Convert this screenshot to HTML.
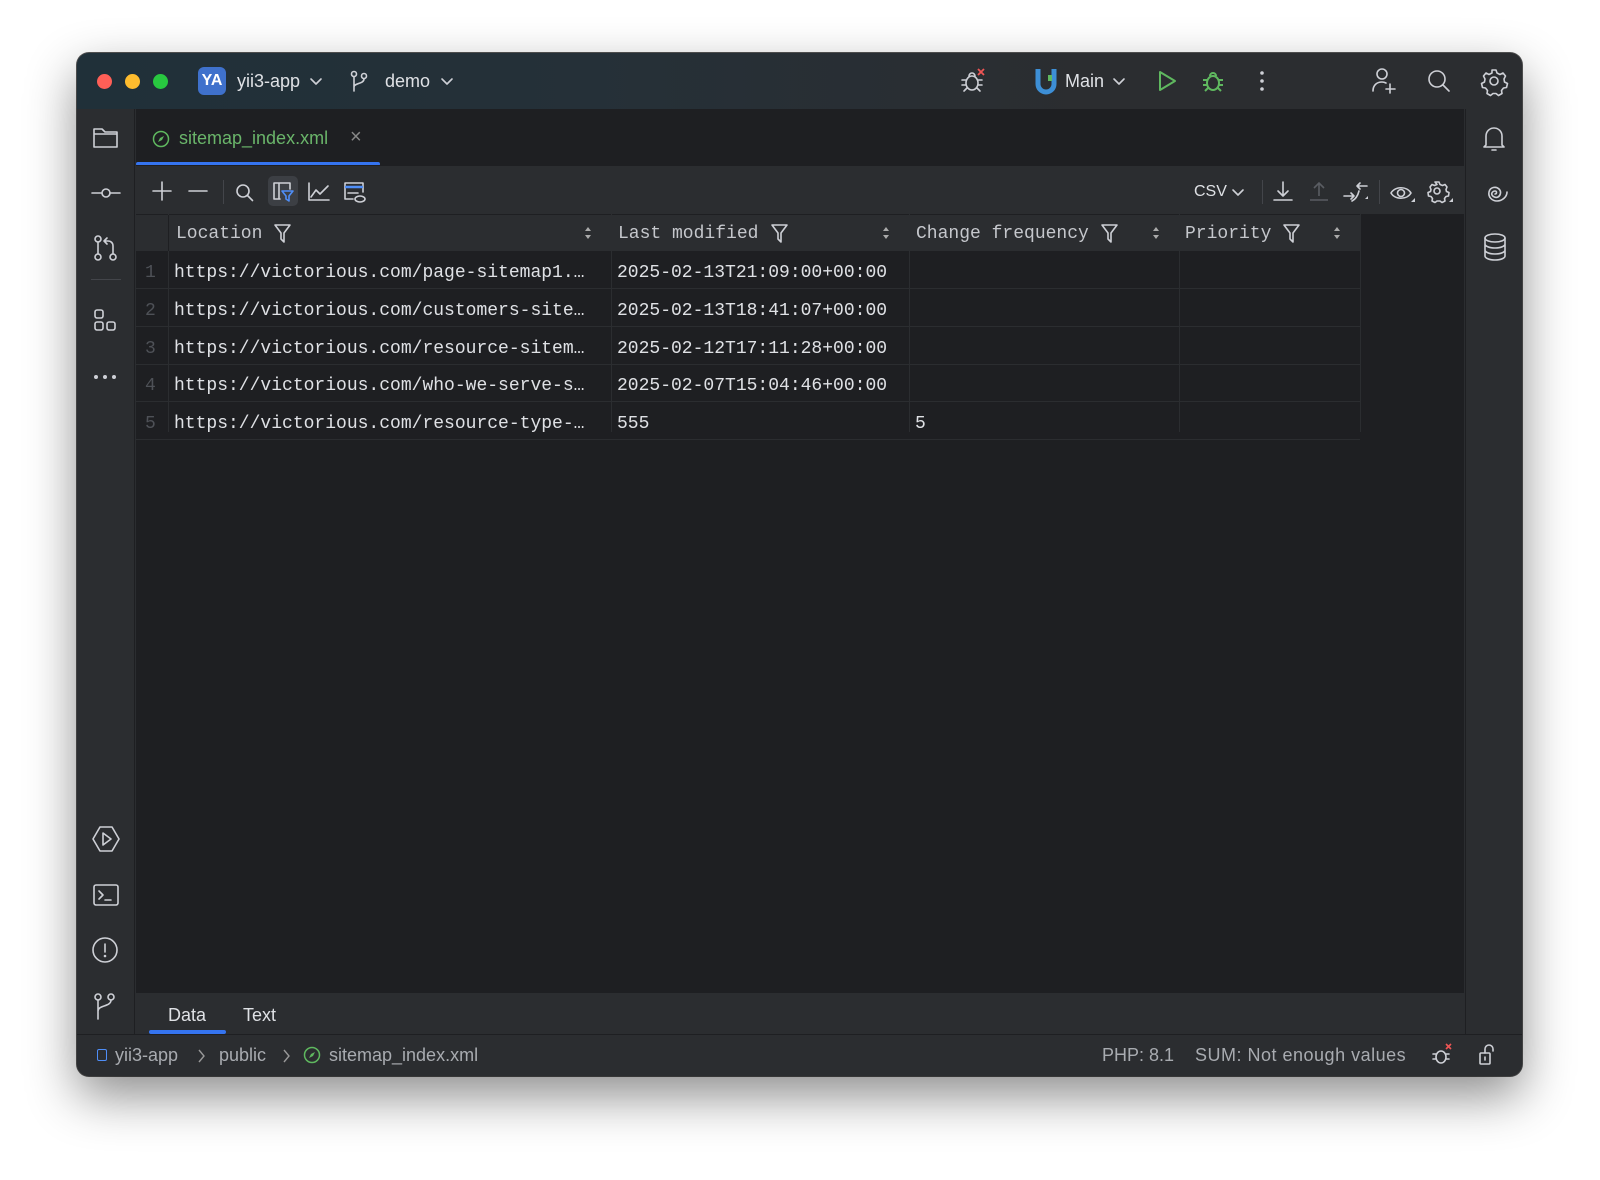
<!DOCTYPE html>
<html><head><meta charset="utf-8"><style>
*{margin:0;padding:0;box-sizing:border-box}
body{width:1600px;height:1180px;background:#fff;position:relative;overflow:hidden;font-family:"Liberation Sans",sans-serif}
.a{position:absolute}
#win{left:77px;top:53px;width:1445px;height:1023px;border-radius:12px;background:#2b2d30;overflow:hidden;box-shadow:0 20px 50px rgba(0,0,0,.45),0 0 0 1px #555;}
#tb{left:0;top:0;width:1445px;height:56px;background:linear-gradient(90deg,#203039 0%,#253038 35%,#2b2d30 70%)}
.dot{width:15px;height:15px;border-radius:50%;top:21px}
.ui{color:#dfe1e5;font-size:18px}
.mono{font-family:"Liberation Mono",monospace;font-size:18px;color:#dfe1e5}
svg{position:absolute;overflow:visible}
.ic{fill:none;stroke:#ced0d6;stroke-width:1.6;stroke-linecap:round;stroke-linejoin:round}
.row{position:absolute;left:59px;width:1224px;height:38px;border-bottom:1px solid #2b2d30}
.vl{position:absolute;top:161px;width:1px;height:218px;background:#2b2d30}
</style></head><body>
<div id="win" class="a">
 <div id="tb" class="a"></div>
 <div class="a dot" style="left:20px;background:#fe5f57"></div>
 <div class="a dot" style="left:48px;background:#febc2e"></div>
 <div class="a dot" style="left:76px;background:#28c840"></div>
 <div class="a" style="left:121px;top:14px;width:28px;height:28px;border-radius:6px;background:#3f71cc;color:#fff;font-size:16px;font-weight:bold;text-align:center;line-height:28px">YA</div>
 <div class="a ui" style="left:160px;top:18px">yii3-app</div>
 <svg style="left:233px;top:25px" width="12" height="8"><path class="ic" d="M1 1l5 5 5-5"/></svg>
 <svg style="left:273px;top:17px" width="20" height="22"><circle class="ic" cx="4" cy="4" r="2.5"/><circle class="ic" cx="14" cy="6" r="2.5"/><path class="ic" d="M4 7v14M14 9c0 5-10 4-10 8"/></svg>
 <div class="a ui" style="left:308px;top:18px">demo</div>
 <svg style="left:364px;top:25px" width="12" height="8"><path class="ic" d="M1 1l5 5 5-5"/></svg>
 <svg style="left:883px;top:15px" width="26" height="26"><ellipse class="ic" cx="12" cy="15" rx="6" ry="7"/><path class="ic" d="M9 8a3 3 0 0 1 6 0M2 12h4M18 12h4M2 17h4M18 17h4M4 23l3-3M20 23l-3-3"/><path d="M18 1l6 6M24 1l-6 6" stroke="#e55" stroke-width="1.8"/></svg>
 <svg style="left:958px;top:14px" width="22" height="28"><path d="M3 2v15a8 8 0 0 0 16 0V2" fill="none" stroke="#3d8fd6" stroke-width="5"/><rect x="13" y="8" width="4" height="6" fill="#5fb85f"/></svg>
 <div class="a ui" style="left:988px;top:18px">Main</div>
 <svg style="left:1036px;top:25px" width="12" height="8"><path class="ic" d="M1 1l5 5 5-5"/></svg>
 <svg style="left:1080px;top:17px" width="20" height="22"><path d="M3 2l15 9-15 9z" fill="none" stroke="#5fb85f" stroke-width="2" stroke-linejoin="round"/></svg>
 <svg style="left:1124px;top:15px" width="24" height="26"><ellipse cx="12" cy="15" rx="6" ry="7" fill="none" stroke="#5fb85f" stroke-width="2"/><path d="M9 8a3 3 0 0 1 6 0M2 12h4M18 12h4M2 17h4M18 17h4M4 23l3-3M20 23l-3-3" fill="none" stroke="#5fb85f" stroke-width="2"/></svg>
 <svg style="left:1182px;top:17px" width="6" height="22"><circle cx="3" cy="3" r="1.8" fill="#ced0d6"/><circle cx="3" cy="11" r="1.8" fill="#ced0d6"/><circle cx="3" cy="19" r="1.8" fill="#ced0d6"/></svg>
 <svg style="left:1294px;top:14px" width="26" height="28"><circle class="ic" cx="11" cy="7" r="5"/><path class="ic" d="M2 24c0-6 4-9 9-9 2 0 3 .5 4 1M19 17v9M15 22h9"/></svg>
 <svg style="left:1350px;top:16px" width="24" height="24"><circle class="ic" cx="10" cy="10" r="8"/><path class="ic" d="M16 16l6 6"/></svg>
 <svg style="left:1404px;top:15px" width="26" height="26"><circle class="ic" cx="13" cy="13" r="4"/><path class="ic" d="M11 2h4l1 3 3 1.5 3-1.5 2.5 3-1.5 3 .5 3 3 1.5-1 4-3 .5-2 2.5.5 3-3.5 2-2.5-2h-3l-2.5 2-3.5-2 .5-3-2-2.5-3-.5-1-4 3-1.5.5-3-1.5-3 2.5-3 3 1.5 3-1.5z"/></svg>

 <div class="a" style="left:0;top:56px;width:58px;height:925px;background:#2b2d30;border-right:1px solid #1e1f22"></div>
 <svg style="left:15px;top:73px" width="28" height="24"><path class="ic" d="M2 3h8l3 3h12v15H2z M2 8h23"/></svg>
 <svg style="left:14px;top:134px" width="30" height="12"><circle class="ic" cx="15" cy="6" r="4"/><path class="ic" d="M1 6h10M19 6h10"/></svg>
 <svg style="left:16px;top:182px" width="26" height="28"><circle class="ic" cx="5" cy="4" r="3"/><circle class="ic" cx="5" cy="22" r="3"/><circle class="ic" cx="20" cy="22" r="3"/><path class="ic" d="M5 7v12M20 19v-8c0-3-2-5-5-5h-3M14 3l-3 3 3 3"/></svg>
 <svg style="left:17px;top:256px" width="24" height="24"><rect class="ic" x="1" y="1" width="8" height="8" rx="2"/><rect class="ic" x="1" y="13" width="8" height="8" rx="2"/><rect class="ic" x="13" y="13" width="8" height="8" rx="2"/></svg>
 <svg style="left:16px;top:321px" width="26" height="6"><circle cx="3" cy="3" r="2" fill="#ced0d6"/><circle cx="12" cy="3" r="2" fill="#ced0d6"/><circle cx="21" cy="3" r="2" fill="#ced0d6"/></svg>
 <div class="a" style="left:14px;top:226px;width:30px;height:1px;background:#43454a"></div>
 <svg style="left:15px;top:773px" width="28" height="26"><path class="ic" d="M8 1h12l7 12-7 12H8L1 13z"/><path class="ic" d="M11 7l8 6-8 6z"/></svg>
 <svg style="left:16px;top:831px" width="26" height="22"><rect class="ic" x="1" y="1" width="24" height="20" rx="2"/><path class="ic" d="M6 7l4 4-4 4M12 16h6"/></svg>
 <svg style="left:15px;top:884px" width="28" height="28"><circle class="ic" cx="13" cy="13" r="12"/><path class="ic" d="M13 7v8"/><circle cx="13" cy="19" r="1.3" fill="#ced0d6"/></svg>
 <svg style="left:17px;top:940px" width="26" height="28"><circle class="ic" cx="4" cy="4" r="3"/><circle class="ic" cx="17" cy="4" r="3"/><path class="ic" d="M4 7v19M17 7c0 7-13 5-13 11"/></svg>

 <div class="a" style="left:1388px;top:56px;width:57px;height:925px;background:#2b2d30;border-left:1px solid #1e1f22"></div>
 <svg style="left:1406px;top:72px" width="24" height="28"><path class="ic" d="M3 20V11a8 8 0 0 1 16 0v9l2 2H1z M9 25h4"/></svg>
 <svg style="left:1405px;top:128px" width="26" height="26"><path class="ic" d="M13 13c2 0 2-3 0-3s-4 2-3 4 4 3 6 2 4-5 1-8-9-2-10 3 3 9 8 9 10-4 10-9"/></svg>
 <svg style="left:1407px;top:180px" width="24" height="28"><ellipse class="ic" cx="11" cy="5" rx="10" ry="4"/><path class="ic" d="M1 5v18c0 2 4 4 10 4s10-2 10-4V5M1 11c0 2 4 4 10 4s10-2 10-4M1 17c0 2 4 4 10 4s10-2 10-4"/></svg>

 <div class="a" style="left:59px;top:56px;width:1328px;height:56px;background:#1e1f22"></div>
 <svg style="left:75px;top:77px" width="18" height="18"><circle cx="9" cy="9" r="7.5" fill="none" stroke="#5fb85f" stroke-width="1.5"/><path d="M12 6l-4 2-2 4 4-2z" fill="#5fb85f"/></svg>
 <div class="a ui" style="left:102px;top:75px;color:#6ab56a">sitemap_index.xml</div>
 <div class="a" style="left:273px;top:73px;color:#888;font-size:20px">×</div>
 <div class="a" style="left:59px;top:109px;width:244px;height:4px;border-radius:2px;background:#3574f0"></div>
 <div class="a" style="left:59px;top:112px;width:1328px;height:49px;background:#2b2d30;border-top:1px solid #1e1f22"></div>
 <svg style="left:75px;top:128px" width="20" height="20"><path class="ic" d="M10 1v18M1 10h18"/></svg>
 <svg style="left:111px;top:128px" width="20" height="20"><path class="ic" d="M1 10h18"/></svg>
 <div class="a" style="left:146px;top:127px;width:1px;height:24px;background:#43454a"></div>
 <svg style="left:158px;top:130px" width="20" height="20"><circle class="ic" cx="8" cy="8" r="6"/><path class="ic" d="M12.5 12.5l5 5"/></svg>
 <div class="a" style="left:191px;top:123px;width:30px;height:30px;border-radius:5px;background:#3c3f44"></div>
 <svg style="left:196px;top:129px" width="22" height="20"><path class="ic" d="M1 1h16v6M1 1v16h6M6 1v16"/><path d="M9 9h11l-4 5v5l-3-2v-3z" fill="none" stroke="#4f8ef7" stroke-width="1.6" stroke-linejoin="round"/></svg>
 <svg style="left:231px;top:129px" width="22" height="20"><path class="ic" d="M1 1v17h20M3 15l5-7 4 4 8-8"/></svg>
 <svg style="left:266px;top:129px" width="24" height="22"><path class="ic" d="M10 17H2V1h18v9"/><path d="M2 5h18" stroke="#4f8ef7" stroke-width="2.5"/><path class="ic" d="M5 11h10"/><ellipse class="ic" cx="17" cy="17" rx="5" ry="3"/></svg>
 <div class="a ui" style="left:1117px;top:130px;font-size:16px">CSV</div>
 <svg style="left:1155px;top:136px" width="12" height="8"><path class="ic" d="M1 1l5 5 5-5"/></svg>
 <div class="a" style="left:1185px;top:127px;width:1px;height:24px;background:#43454a"></div>
 <svg style="left:1196px;top:128px" width="20" height="22"><path class="ic" d="M10 1v14M5 10l5 5 5-5M1 19h18"/></svg>
 <svg style="left:1232px;top:128px" width="20" height="22"><path d="M10 15V2M5 7l5-5 5 5M1 19h18" fill="none" stroke="#5a5d63" stroke-width="1.6"/></svg>
 <svg style="left:1266px;top:127px" width="26" height="24"><path class="ic" d="M1 16h10M8 13l3 3-3 3M24 6H14M17 3l-3 3 3 3M9 21c4-2 6-6 7-10"/><path d="M22 19l3 0 0-3z" fill="#ced0d6"/></svg>
 <div class="a" style="left:1302px;top:127px;width:1px;height:24px;background:#43454a"></div>
 <svg style="left:1313px;top:131px" width="28" height="20"><path class="ic" d="M1 9c4-7 16-7 20 0-4 7-16 7-20 0z"/><circle class="ic" cx="11" cy="9" r="3.5"/><path d="M21 18h4v-4z" fill="#ced0d6"/></svg>
 <svg style="left:1350px;top:128px" width="28" height="24"><circle class="ic" cx="10" cy="10" r="3"/><path class="ic" d="M8 1h4l1 2.5 2.5 1 2.5-1 2 2.5-1 2.5.5 2 2.5 1-.5 3.5-2.5.5-1.5 2 .5 2.5-3 1.5-2-1.5h-3l-2 1.5-3-1.5.5-2.5-1.5-2-2.5-.5-.5-3.5 2.5-1 .5-2-1-2.5 2-2.5 2.5 1 2.5-1z"/><path d="M22 21h4v-4z" fill="#ced0d6"/></svg>

 <div class="a" style="left:59px;top:161px;width:1328px;height:780px;background:#1e1f22"></div>
 <div class="a" style="left:59px;top:162px;width:1224px;height:36px;background:#2b2d30"></div>
 <div class="row" style="top:198px"></div><div class="row" style="top:236px"></div><div class="row" style="top:274px"></div><div class="row" style="top:311px"></div><div class="row" style="top:349px"></div>
 <div class="vl" style="left:91px"></div><div class="vl" style="left:534px"></div><div class="vl" style="left:832px"></div><div class="vl" style="left:1102px"></div><div class="vl" style="left:1283px"></div>
 <div class="a" style="left:91px;top:162px;width:1px;height:36px;background:#1e1f22"></div>
 <div class="a mono" style="left:99px;top:171px;color:#c5c7cc">Location</div>
 <div class="a mono" style="left:541px;top:171px;color:#c5c7cc">Last modified</div>
 <div class="a mono" style="left:839px;top:171px;color:#c5c7cc">Change frequency</div>
 <div class="a mono" style="left:1108px;top:171px;color:#c5c7cc">Priority</div>
 <svg style="left:197px;top:171px" width="18" height="20"><path class="ic" d="M1 1h15l-6 8v9l-3-3V9z"/></svg>
 <svg style="left:694px;top:171px" width="18" height="20"><path class="ic" d="M1 1h15l-6 8v9l-3-3V9z"/></svg>
 <svg style="left:1024px;top:171px" width="18" height="20"><path class="ic" d="M1 1h15l-6 8v9l-3-3V9z"/></svg>
 <svg style="left:1206px;top:171px" width="18" height="20"><path class="ic" d="M1 1h15l-6 8v9l-3-3V9z"/></svg>
 <svg style="left:507px;top:174px" width="8" height="12"><path d="M4 0l3 4H1zM4 12l3-4H1z" fill="#aaa"/></svg>
 <svg style="left:805px;top:174px" width="8" height="12"><path d="M4 0l3 4H1zM4 12l3-4H1z" fill="#aaa"/></svg>
 <svg style="left:1075px;top:174px" width="8" height="12"><path d="M4 0l3 4H1zM4 12l3-4H1z" fill="#aaa"/></svg>
 <svg style="left:1256px;top:174px" width="8" height="12"><path d="M4 0l3 4H1zM4 12l3-4H1z" fill="#aaa"/></svg>
 <div class="a mono" style="left:68px;top:202px;color:#4e5157;line-height:37.8px">1<br>2<br>3<br>4<br>5</div>
 <div class="a mono" style="left:97px;top:202px;line-height:37.8px;white-space:pre">https://victorious.com/page-sitemap1.…
https://victorious.com/customers-site…
https://victorious.com/resource-sitem…
https://victorious.com/who-we-serve-s…
https://victorious.com/resource-type-…</div>
 <div class="a mono" style="left:540px;top:202px;line-height:37.8px;white-space:pre">2025-02-13T21:09:00+00:00
2025-02-13T18:41:07+00:00
2025-02-12T17:11:28+00:00
2025-02-07T15:04:46+00:00
555</div>
 <div class="a mono" style="left:838px;top:353px;line-height:37.8px">5</div>

 <div class="a" style="left:59px;top:940px;width:1328px;height:41px;background:#2b2d30"></div>
 <div class="a ui" style="left:91px;top:952px">Data</div>
 <div class="a ui" style="left:166px;top:952px">Text</div>
 <div class="a" style="left:72px;top:977px;width:77px;height:4px;border-radius:2px;background:#3574f0"></div>
 <div class="a" style="left:0;top:981px;width:1445px;height:42px;background:#2b2d30;border-top:1px solid #1e1f22"></div>
 <div class="a" style="left:20px;top:996px;width:10px;height:12px;border:1.5px solid #4f8ef7;border-radius:2px"></div>
 <div class="a ui" style="left:38px;top:992px;color:#a8abb0">yii3-app</div>
 <svg style="left:121px;top:996px" width="8" height="14"><path d="M1 1l5 6-5 6" fill="none" stroke="#999" stroke-width="1.4"/></svg>
 <div class="a ui" style="left:142px;top:992px;color:#a8abb0">public</div>
 <svg style="left:206px;top:996px" width="8" height="14"><path d="M1 1l5 6-5 6" fill="none" stroke="#999" stroke-width="1.4"/></svg>
 <svg style="left:226px;top:993px" width="18" height="18"><circle cx="9" cy="9" r="7.5" fill="none" stroke="#5fb85f" stroke-width="1.5"/><path d="M12 6l-4 2-2 4 4-2z" fill="#5fb85f"/></svg>
 <div class="a ui" style="left:252px;top:992px;color:#a8abb0">sitemap_index.xml</div>
 <div class="a ui" style="left:1025px;top:992px;color:#a8abb0">PHP: 8.1</div>
 <div class="a ui" style="left:1118px;top:992px;color:#a8abb0;letter-spacing:0.5px">SUM: Not enough values</div>
 <svg style="left:1354px;top:990px" width="22" height="24"><ellipse class="ic" cx="10" cy="14" rx="5" ry="6"/><path class="ic" d="M2 11h3M15 11h3M2 16h3M15 16h3"/><path d="M15 1l5 5M20 1l-5 5" stroke="#e55" stroke-width="1.6"/></svg>
 <svg style="left:1402px;top:991px" width="18" height="22"><rect class="ic" x="1" y="9" width="10" height="11" rx="1"/><path class="ic" d="M6 9V5a4 4 0 0 1 8 0v2M6 13v3"/></svg>
</div>
</body></html>
